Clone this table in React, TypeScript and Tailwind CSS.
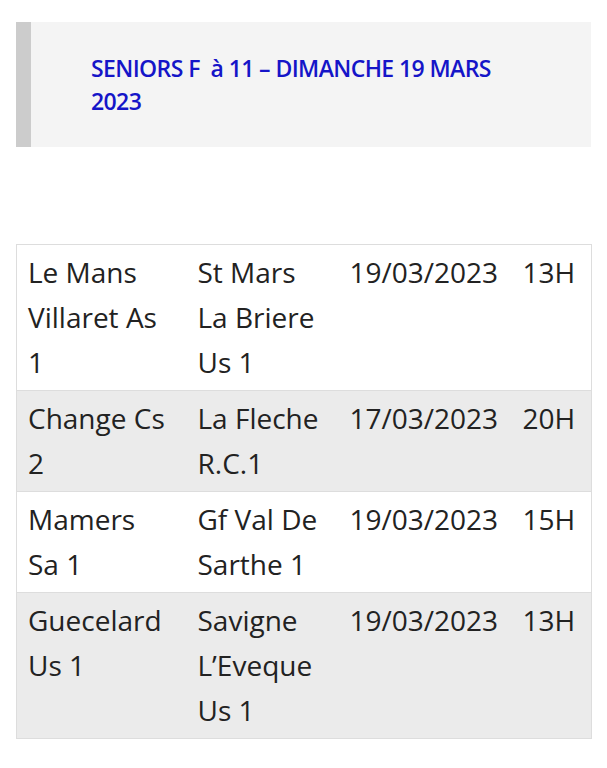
import React from "react";

const rows = [
  ["Le Mans Villaret As 1", "St Mars La Briere Us 1", "19/03/2023", "13H"],
  ["Change Cs 2", "La Fleche R.C.1", "17/03/2023", "20H"],
  ["Mamers Sa 1", "Gf Val De Sarthe 1", "19/03/2023", "15H"],
  ["Guecelard Us 1", "Savigne L’Eveque Us 1", "19/03/2023", "13H"],
];

export default function App() {
  return (
    <div className="w-[607px] h-[768px] bg-white px-4 pt-[22px]" style={{ fontFamily: '"Open Sans", sans-serif' }}>
      <div className="flex bg-[#f4f4f4] h-[125px]">
        <div className="w-[15px] shrink-0 bg-[#cccccc]" />
        <div className="pl-[60px] pr-[80px] pt-[30px] text-[23px] leading-[33px] font-semibold text-[#1515c8] tracking-[-0.6px]">
          SENIORS F&nbsp; à 11 – DIMANCHE 19 MARS 2023
        </div>
      </div>
      <table className="mt-[97px] w-[575px] border-collapse border border-[#dddddd] text-[28px] leading-[45px] text-[#222222] table-fixed">
        <colgroup>
          <col className="w-[169px]" />
          <col className="w-[152px]" />
          <col className="w-[173px]" />
          <col className="w-[81px]" />
        </colgroup>
        <tbody>
          {rows.map((r, i) => (
            <tr key={i} className={i % 2 === 1 ? "bg-[#ebebeb] border-t border-[#dddddd]" : "bg-white border-t border-[#dddddd]"}>
              <td className="align-top pl-[11px] pr-[18px] pt-[5px] pb-[5px]">{r[0]}</td>
              <td className="align-top pl-[12px] pr-[12px] pt-[5px] pb-[5px]">{r[1]}</td>
              <td className="align-top pl-[12px] pr-[4px] pt-[5px] pb-[5px]">{r[2]}</td>
              <td className="align-top pl-[12px] pr-[4px] pt-[5px] pb-[5px]">{r[3]}</td>
            </tr>
          ))}
        </tbody>
      </table>
    </div>
  );
}
